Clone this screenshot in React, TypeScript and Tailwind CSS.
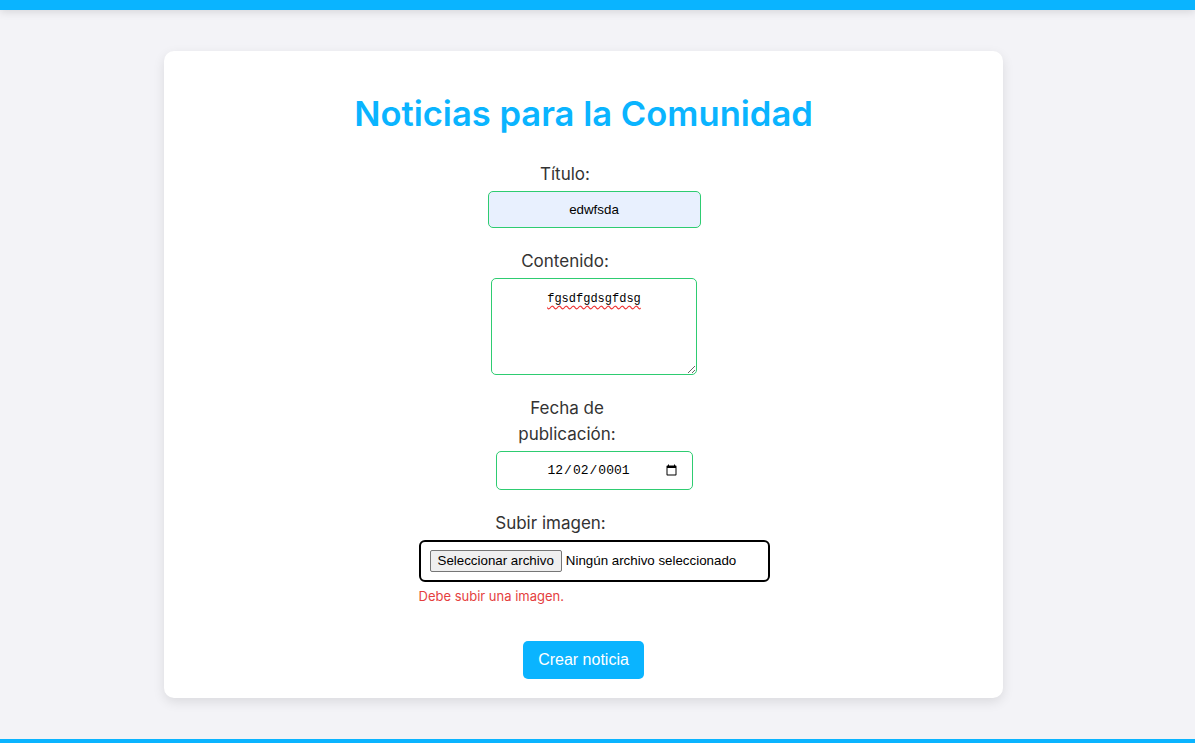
import { useState } from 'react'

export default function App() {
  const [titulo, setTitulo] = useState('edwfsda')
  const [contenido, setContenido] = useState('fgsdfgdsgfdsg')
  const [fecha, setFecha] = useState('0001-12-02')

  return (
    <div className="h-[743px] flex flex-col bg-[#f3f3f7] font-['Inter',sans-serif] overflow-hidden">
      <div className="h-[10px] shrink-0 bg-[#0ab4ff] shadow-[0_2px_8px_rgba(0,0,0,0.12)]" />

      <main className="flex-1 flex justify-center pt-[41px] pr-[28px]">
        <div className="w-[839px] h-[647px] bg-white rounded-[10px] shadow-[0_4px_12px_rgba(0,0,0,0.1)] flex flex-col items-center pt-[42px]">
          <h1 className="text-[34.6px] leading-[40px] font-semibold text-[#0ab4ff]">Noticias para la Comunidad</h1>

          <form className="mt-[28px] flex flex-col items-center gap-[20px]" onSubmit={e => e.preventDefault()}>
            <div className="flex flex-col items-center gap-1">
              <label className="w-[130px] mr-[37px] text-center text-[17px] leading-[26px] text-[#333]">Título:</label>
              <input
                value={titulo}
                onChange={e => setTitulo(e.target.value)}
                className="ml-[21px] w-[213px] h-[37px] rounded-[5px] border border-[#2ecc71] bg-[#e8f0fe] text-center text-[13.33px] text-black font-['Liberation_Sans',Arial,sans-serif] outline-none"
              />
            </div>

            <div className="flex flex-col items-center gap-1">
              <label className="w-[130px] mr-[37px] text-center text-[17px] leading-[26px] text-[#333]">Contenido:</label>
              <textarea
                value={contenido}
                onChange={e => setContenido(e.target.value)}
                className="ml-[21px] w-[206px] h-[97px] rounded-[5px] border border-[#2ecc71] bg-white px-2 pt-[12px] text-center text-[12px] leading-[16px] text-black font-['Liberation_Mono',monospace] underline decoration-wavy decoration-[#ee3333] underline-offset-[3px] outline-none"
              />
            </div>

            <div className="flex flex-col items-center gap-1">
              <label className="w-[130px] mr-[33px] text-center text-[17px] leading-[26px] text-[#333]">Fecha de publicación:</label>
              <input
                type="date"
                value={fecha}
                onChange={e => setFecha(e.target.value)}
                className="ml-[21px] w-[197px] h-[39px] rounded-[5px] border border-[#2ecc71] bg-white pl-[50px] pr-3 text-[13px] text-black font-['Liberation_Mono',monospace] outline-none"
              />
            </div>

            <div className="flex flex-col items-center gap-1">
              <label className="w-[130px] mr-[66px] text-center text-[17px] leading-[26px] text-[#333]">Subir imagen:</label>
              <div className="ml-[21px] w-[351px]">
                <div className="h-[42px] rounded-[6px] border-2 border-black flex items-center px-[9px] gap-[4px] font-['Liberation_Sans',Arial,sans-serif] text-[13.33px] text-black">
                  <span className="h-[22px] px-[7px] flex items-center rounded-[2px] border border-[#767676] bg-[#efefef]">Seleccionar archivo</span>
                  <span>Ningún archivo seleccionado</span>
                </div>
                <p className="mt-[5px] text-[13px] leading-[18px] text-[#e53e3e]">Debe subir una imagen.</p>
              </div>
            </div>
          </form>

          <button className="mt-[36px] w-[121px] h-[38px] rounded-[5px] bg-[#0ab4ff] text-white text-[16px] font-['Liberation_Sans',Arial,sans-serif]">
            Crear noticia
          </button>
        </div>
      </main>

      <div className="h-[4px] shrink-0 bg-[#0ab4ff]" />
    </div>
  )
}
